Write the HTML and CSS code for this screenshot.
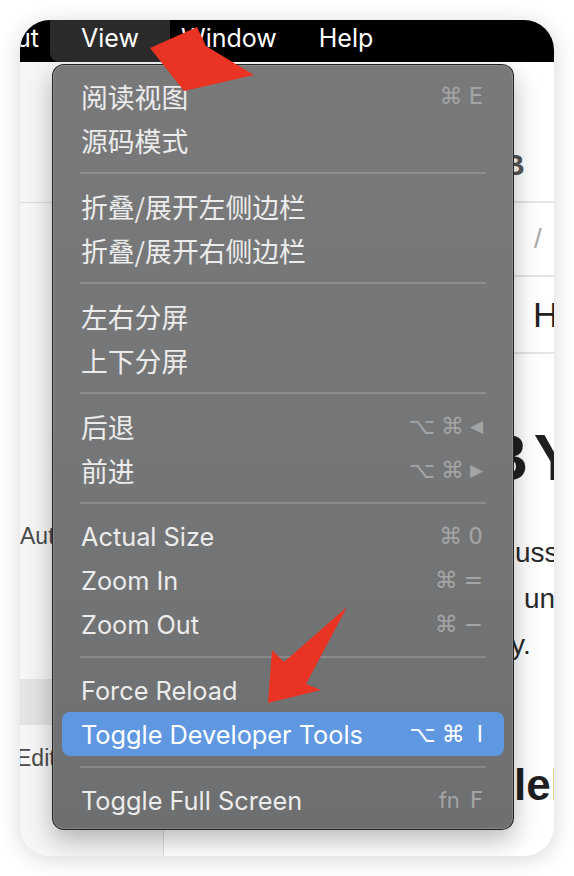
FILE: index.html
```html
<!DOCTYPE html>
<html lang="zh-CN">
<head>
<meta charset="utf-8">
<title>View menu</title>
<link rel="stylesheet" href="styles.css">
</head>
<body>
<div class="window">
  <div class="menubar">
    <span class="mb-item mb-cut">ut</span>
    <span class="mb-item mb-active">View</span>
    <span class="mb-item mb-window">Window</span>
    <span class="mb-item mb-help">Help</span>
  </div>
  <div class="app">
    <aside class="sidebar">
      <div class="sb-head"></div>
      <div class="sb-item sb-aut">Auto Save</div>
      <div class="sb-sel"></div>
      <div class="sb-item sb-edit">Edit Mode</div>
    </aside>
    <main class="content">
      <div class="row row-title"><span>B</span></div>
      <div class="row row-path"><span>/</span></div>
      <div class="row row-h"><span>H</span></div>
      <div class="doc">
        <h1 class="doc-h1">B Y</h1>
        <p class="doc-p"><span class="l1">usse</span><span class="l2">un</span><span class="l3">y.</span></p>
        <h2 class="doc-h2">lel</h2>
      </div>
    </main>
  </div>

  <div class="menu">
    <div class="item"><span class="label cjk">阅读视图</span><span class="key"><i>⌘</i><i>E</i></span></div>
    <div class="item"><span class="label cjk">源码模式</span></div>
    <div class="sep"></div>
    <div class="item"><span class="label cjk">折叠/展开左侧边栏</span></div>
    <div class="item"><span class="label cjk">折叠/展开右侧边栏</span></div>
    <div class="sep"></div>
    <div class="item"><span class="label cjk">左右分屏</span></div>
    <div class="item"><span class="label cjk">上下分屏</span></div>
    <div class="sep"></div>
    <div class="item"><span class="label cjk">后退</span><span class="key"><i>⌥</i><i>⌘</i><i class="tri">◀</i></span></div>
    <div class="item"><span class="label cjk">前进</span><span class="key"><i>⌥</i><i>⌘</i><i class="tri">▶</i></span></div>
    <div class="sep"></div>
    <div class="item"><span class="label">Actual Size</span><span class="key"><i>⌘</i><i>0</i></span></div>
    <div class="item"><span class="label">Zoom In</span><span class="key"><i>⌘</i><i>=</i></span></div>
    <div class="item"><span class="label">Zoom Out</span><span class="key"><i>⌘</i><i>−</i></span></div>
    <div class="sep"></div>
    <div class="item"><span class="label">Force Reload</span></div>
    <div class="item active"><span class="label">Toggle Developer Tools</span><span class="key"><i>⌥</i><i>⌘</i><i class="bar">I</i></span></div>
    <div class="sep"></div>
    <div class="item"><span class="label">Toggle Full Screen</span><span class="key"><i class="fn">fn</i><i>F</i></span></div>
  </div>
</div>

<svg class="arrows" width="574" height="876" viewBox="0 0 574 876">
  <polygon points="150,48 197,27 206,46 254,75 184,91" fill="#e93323"/>
  <polygon points="347,607 284,662 272,650 268,703 321,690 306,684" fill="#e93323"/>
</svg>
</body>
</html>
```
FILE: styles.css
```css
* {
  box-sizing: border-box;
  margin: 0;
  padding: 0;
}

html,
body {
  width: 574px;
  height: 876px;
  overflow: hidden;
  background: #ffffff;
}

body {
  position: relative;
  padding: 20px;
  font-family: Inter, "Noto Sans CJK SC", "DejaVu Sans", sans-serif;
}

.window {
  position: relative;
  width: 534px;
  height: 836px;
  border-radius: 30px;
  overflow: hidden;
  background: #ffffff;
  box-shadow: 0 3px 22px rgba(0, 0, 0, 0.16);
  display: flex;
  flex-direction: column;
}

/* ---------- menubar ---------- */
.menubar {
  height: 42px;
  flex: 0 0 42px;
  background: #000000;
  color: #ffffff;
  display: flex;
  font-size: 25px;
}

.mb-item {
  display: flex;
  align-items: center;
  padding-bottom: 7px;
  white-space: nowrap;
}

.mb-cut {
  width: 30px;
  overflow: hidden;
  padding-left: 0;
  text-indent: -4px;
}

.mb-active {
  width: 120px;
  padding-left: 31px;
  background: #2b2b2b;
  border-radius: 0 0 9px 9px;
}

.mb-window {
  margin-left: 11px;
}

.mb-help {
  margin-left: 42px;
}

/* ---------- background app ---------- */
.app {
  flex: 1;
  display: flex;
  min-height: 0;
}

.sidebar {
  width: 144px;
  flex: 0 0 144px;
  background: #f6f6f6;
  border-right: 1px solid #dedede;
  display: flex;
  flex-direction: column;
  font-family: "Liberation Sans", sans-serif;
  font-size: 23px;
  color: #4a4a4a;
}

.sb-head {
  height: 141px;
  border-bottom: 1px solid #dddddd;
}

.sb-item {
  height: 44px;
  display: flex;
  align-items: center;
  white-space: nowrap;
}

.sb-aut {
  margin-top: 311px;
}

.sb-sel {
  margin-top: 121px;
  height: 46px;
  background: #e4e4e4;
}

.sb-edit {
  margin-top: 11px;
  margin-left: -4px;
}

.content {
  flex: 1;
  display: flex;
  flex-direction: column;
  font-family: "Liberation Sans", sans-serif;
  color: #222222;
}

.row {
  display: flex;
  align-items: center;
  border-bottom: 2px solid #e4e4e4;
  white-space: nowrap;
}

.row-title {
  height: 141px;
  align-items: flex-end;
  padding: 0 0 19px 339px;
  font-size: 30px;
  font-weight: 700;
  color: #555555;
}

.row-path {
  height: 74px;
  padding-left: 370px;
  font-size: 28px;
  color: #aaaaaa;
}

.row-h {
  height: 77px;
  padding-left: 369px;
  font-size: 35px;
  color: #222222;
}

.doc {
  padding-left: 318px;
  white-space: nowrap;
}

.doc-h1 {
  margin-top: 72px;
  font-size: 64px;
  line-height: 64px;
  font-weight: 700;
  word-spacing: -11px;
  color: #1f1f1f;
}

.doc-p {
  margin-top: 40px;
  font-size: 28px;
  line-height: 46px;
  color: #2a2a2a;
  display: flex;
  flex-direction: column;
}

.doc-p .l1 { padding-left: 33px; }
.doc-p .l2 { padding-left: 42px; }
.doc-p .l3 { padding-left: 29px; }

.doc-h2 {
  margin-top: 92px;
  padding-left: 32px;
  font-size: 44px;
  font-weight: 700;
  color: #1f1f1f;
}

/* ---------- dropdown menu ---------- */
.menu {
  position: absolute;
  left: 32px;
  top: 44px;
  width: 462px;
  height: 766px;
  padding: 9px 9px 7px;
  border: 1px solid rgba(20, 20, 20, 0.85);
  border-radius: 12px;
  background: linear-gradient(180deg, #79797a 0%, #757677 50%, #6e6f70 100%);
  box-shadow: inset 0 0 0 1px rgba(255, 255, 255, 0.14), 0 10px 26px rgba(0, 0, 0, 0.28);
  color: #ececec;
  font-size: 25.3px;
}

.item {
  height: 44px;
  display: flex;
  align-items: center;
  justify-content: space-between;
  padding: 0 21px 0 19px;
  border-radius: 8px;
  white-space: nowrap;
}

.label.cjk {
  font-family: "Noto Sans CJK SC", sans-serif;
  font-size: 26.8px;
  margin-top: 0;
}

.item.active {
  background: #5f97e1;
  color: #ffffff;
}

.key {
  display: flex;
  align-items: center;
  gap: 6px;
  color: #a4a4a4;
  font-family: "DejaVu Sans", sans-serif;
  font-size: 23px;
}

.item.active .key {
  color: #ffffff;
}

.key i {
  font-style: normal;
}

.key .tri {
  font-size: 17px;
}

.key .bar {
  margin-left: 6px;
  font-family: Inter, sans-serif;
}

.key .fn {
  font-family: Inter, sans-serif;
  font-size: 22px;
  margin-right: 4px;
}

.sep {
  height: 22px;
  display: flex;
  align-items: center;
  padding: 0 18px;
}

.sep::before {
  content: "";
  display: block;
  width: 100%;
  height: 2px;
  background: rgba(255, 255, 255, 0.17);
}

/* ---------- annotation arrows ---------- */
.arrows {
  position: absolute;
  left: 0;
  top: 0;
  pointer-events: none;
}
```
